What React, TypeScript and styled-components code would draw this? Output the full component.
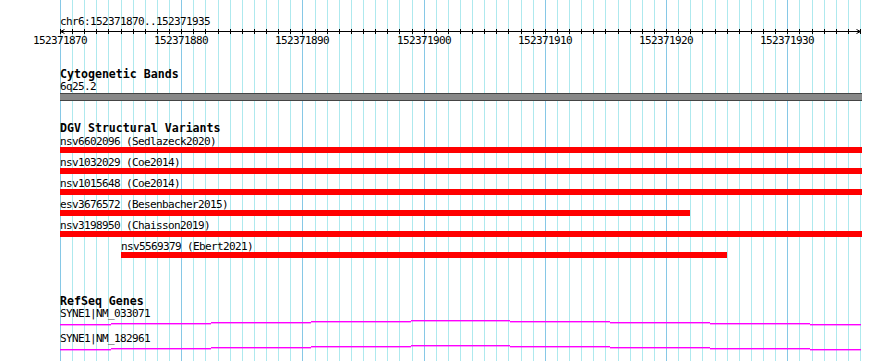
import React from 'react';
import styled, { createGlobalStyle } from 'styled-components';

const VIEW_START = 152371870;
const VIEW_END = 152371935;
const LEFT = 60;
const RIGHT = 862;
const SPAN = VIEW_END - VIEW_START + 1;
const PX_PER_BP = 800 / SPAN;
const PAGE_HEIGHT = 361;

const toX = (pos: number) => Math.round(LEFT + (pos - VIEW_START) * PX_PER_BP);
const clipX = (x: number) => Math.min(Math.max(x, LEFT), RIGHT);

interface Variant {
  id: string;
  study: string;
  start: number;
  end: number;
}

interface Transcript {
  gene: string;
  accession: string;
}

const variants: Variant[] = [
  { id: 'nsv6602096', study: 'Sedlazeck2020', start: 152360000, end: 152390000 },
  { id: 'nsv1032029', study: 'Coe2014', start: 152350000, end: 152380000 },
  { id: 'nsv1015648', study: 'Coe2014', start: 152351000, end: 152381000 },
  { id: 'esv3676572', study: 'Besenbacher2015', start: 152371800, end: 152371922 },
  { id: 'nsv3198950', study: 'Chaisson2019', start: 152371870, end: 152372400 },
  { id: 'nsv5569379', study: 'Ebert2021', start: 152371875, end: 152371925 },
];

const transcripts: Transcript[] = [
  { gene: 'SYNE1', accession: 'NM_033071' },
  { gene: 'SYNE1', accession: 'NM_182961' },
];

const GlobalStyle = createGlobalStyle`
  html, body {
    margin: 0;
    padding: 0;
    background: #ffffff;
  }
  body {
    font-family: "DejaVu Sans Mono", "Liberation Mono", monospace;
    color: #000;
  }
`;

const Page = styled.div`
  position: relative;
  width: 890px;
  height: ${PAGE_HEIGHT}px;
  overflow: hidden;
  background: #ffffff;
`;

const GridLayer = styled.svg`
  position: absolute;
  top: 0;
  left: 0;
  z-index: 0;
`;

const Content = styled.div`
  position: relative;
  z-index: 1;
  display: flex;
  flex-direction: column;
`;

const LocationLabel = styled.div`
  margin-top: 16px;
  padding-left: ${LEFT}px;
  font-size: 11px;
  letter-spacing: -0.62px;
  line-height: 12px;
  height: 12px;
`;

const RulerSvg = styled.svg`
  display: block;
  font-family: "DejaVu Sans Mono", "Liberation Mono", monospace;
  font-size: 11px;
  letter-spacing: -0.62px;
`;

const TrackSection = styled.section<{ $gap: number }>`
  display: flex;
  flex-direction: column;
  margin-top: ${p => p.$gap}px;
`;

const TrackTitle = styled.div`
  padding-left: ${LEFT}px;
  font-size: 11.6px;
  font-weight: bold;
  line-height: 12px;
  height: 12px;
  white-space: pre;
`;

const FeatureLabel = styled.div<{ $left: number }>`
  padding-left: ${p => p.$left}px;
  font-size: 11px;
  letter-spacing: -0.62px;
  line-height: 11px;
  height: 11px;
  white-space: pre;
`;

const BandLabel = styled(FeatureLabel)`
  margin-top: 1px;
`;

const BandBar = styled.div`
  margin: 1px 0 0 ${LEFT}px;
  width: ${RIGHT - LEFT}px;
  height: 8px;
  box-sizing: border-box;
  background: #888888;
  border-top: 1px solid #444444;
  border-bottom: 1px solid #444444;
`;

const VariantList = styled.div`
  display: flex;
  flex-direction: column;
  gap: 4px;
  margin-top: 2px;
`;

const VariantRow = styled.div`
  display: flex;
  flex-direction: column;
`;

const VariantBar = styled.div<{ $left: number; $width: number }>`
  margin-left: ${p => p.$left}px;
  width: ${p => p.$width}px;
  height: 6px;
  background: #ff0000;
`;

const GeneList = styled.div`
  display: flex;
  flex-direction: column;
  margin-top: 1px;
`;

const GeneRow = styled.div`
  display: flex;
  flex-direction: column;
`;

const GeneSvg = styled.svg`
  display: block;
`;

// one grid line per base boundary, 0..SPAN inclusive
const gridIndexes = Array.from({ length: SPAN + 1 }, (_, i) => i);
const RULER_END = toX(VIEW_START + SPAN);

const Grid: React.FC = () => (
  <GridLayer width={890} height={PAGE_HEIGHT}>
    {gridIndexes.map(i => (
      <rect
        key={i}
        x={toX(VIEW_START + i)}
        y={0}
        width={1}
        height={PAGE_HEIGHT}
        fill={i % 10 === 0 ? '#86c8e6' : '#aee9ee'}
      />
    ))}
  </GridLayer>
);

const Ruler: React.FC = () => (
  <RulerSvg width={890} height={18}>
    <rect x={LEFT} y={3} width={RULER_END - LEFT + 1} height={1} fill="#000" />
    {gridIndexes.map(i => (
      <rect key={i} x={toX(VIEW_START + i)} y={1} width={1} height={5} fill="#000" />
    ))}
    <polyline points={`${LEFT + 4.5},1.5 ${LEFT + 0.5},3.5 ${LEFT + 4.5},5.5`} fill="none" stroke="#000" strokeWidth={1} />
    <polyline points={`${RULER_END - 3.5},1.5 ${RULER_END + 0.5},3.5 ${RULER_END - 3.5},5.5`} fill="none" stroke="#000" strokeWidth={1} />
    {gridIndexes
      .filter(i => i % 10 === 0 && i < SPAN)
      .map(i => (
        <text key={i} x={toX(VIEW_START + i)} y={16} textAnchor="middle" fill="#000">
          {VIEW_START + i}
        </text>
      ))}
  </RulerSvg>
);

// intron "hat" is nearly flat this deep in, so it draws as 1px steps
const hatSegments = () => {
  const mid = (LEFT + RULER_END) / 2;
  const segs: { x: number; w: number; y: number }[] = [];
  let x = LEFT;
  while (x <= RULER_END) {
    const step = Math.round(Math.abs(x - mid) / 100);
    let next = x + 1;
    while (next <= RULER_END && Math.round(Math.abs(next - mid) / 100) === step) next++;
    segs.push({ x, w: next - x, y: 1 + step });
    x = next;
  }
  return segs;
};

const GeneLine: React.FC = () => (
  <GeneSvg width={890} height={14}>
    {hatSegments().map(s => (
      <rect key={s.x} x={s.x} y={s.y} width={s.w} height={1.4} fill="#ff00ff" />
    ))}
  </GeneSvg>
);

const App: React.FC = () => {
  return (
    <Page>
      <GlobalStyle />
      <Grid />
      <Content>
        <LocationLabel>
          chr6:{VIEW_START}..{VIEW_END}
        </LocationLabel>
        <Ruler />

        <TrackSection $gap={22}>
          <TrackTitle>Cytogenetic Bands</TrackTitle>
          <BandLabel $left={LEFT}>6q25.2</BandLabel>
          <BandBar />
        </TrackSection>

        <TrackSection $gap={21}>
          <TrackTitle>DGV Structural Variants</TrackTitle>
          <VariantList>
            {variants.map(v => {
              const left = clipX(toX(v.start));
              const right = clipX(toX(v.end));
              return (
                <VariantRow key={v.id}>
                  <FeatureLabel $left={left}>
                    {v.id} ({v.study})
                  </FeatureLabel>
                  <VariantBar $left={left} $width={right - left} />
                </VariantRow>
              );
            })}
          </VariantList>
        </TrackSection>

        <TrackSection $gap={37}>
          <TrackTitle>RefSeq Genes</TrackTitle>
          <GeneList>
            {transcripts.map(t => (
              <GeneRow key={t.accession}>
                <FeatureLabel $left={LEFT}>
                  {t.gene}|{t.accession}
                </FeatureLabel>
                <GeneLine />
              </GeneRow>
            ))}
          </GeneList>
        </TrackSection>
      </Content>
    </Page>
  );
};

export default App;
